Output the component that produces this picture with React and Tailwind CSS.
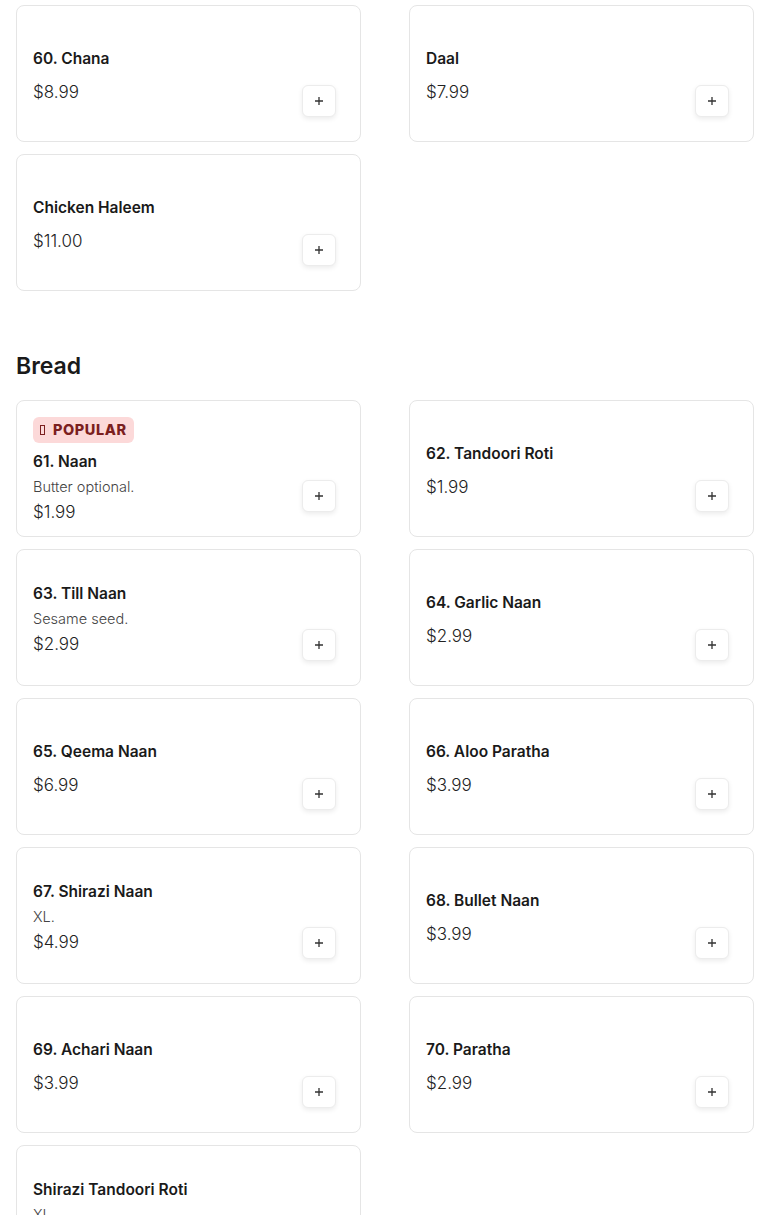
import React from "react";

const font = { fontFamily: '"Inter", "Lato", "Liberation Sans", sans-serif' };

function Card({ name, desc, price, popular }) {
  return (
    <div className="h-[137px] rounded-lg border border-[#e5e5e5] bg-white flex p-4">
      <div className={`flex-1 flex flex-col min-w-0 ${popular ? "justify-start" : "justify-center pt-[4px]"}`}>
        {popular && (
          <div className="shrink-0 self-start mb-[8px] flex items-center gap-[8px] rounded-md bg-[#fcd9d9] px-[7px] h-[26px]">
            <span className="inline-block w-[5px] h-[10px] border border-[#7b1f1f]" />
            <span className="text-[14.5px] font-extrabold tracking-[0.04em] text-[#7b1f1f] leading-none">POPULAR</span>
          </div>
        )}
        <div className="shrink-0 text-[15.5px] font-semibold text-[#1a1a1a] leading-[22px]">{name}</div>
        {desc && <div className="shrink-0 text-[14.5px] font-light text-[#444] leading-[21px] mt-[3px]">{desc}</div>}
        <div className={`shrink-0 text-[17px] font-light text-[#222] leading-[24px] ${desc ? "mt-[3px]" : "mt-[10px]"}`}>{price}</div>
      </div>
      <button className="self-end mb-[8px] mr-[8px] w-[34px] h-[32px] rounded-md border border-[#ececec] bg-white shadow-[0_2px_5px_rgba(0,0,0,0.08)] flex items-center justify-center">
        <svg width="10" height="10" viewBox="0 0 10 10">
          <path d="M5 1v8M1 5h8" stroke="#333" strokeWidth="1.3" />
        </svg>
      </button>
    </div>
  );
}

export default function App() {
  const top = [
    { name: "60. Chana", price: "$8.99" },
    { name: "Daal", price: "$7.99" },
    { name: "Chicken Haleem", price: "$11.00" },
  ];
  const bread = [
    { name: "61. Naan", desc: "Butter optional.", price: "$1.99", popular: true },
    { name: "62. Tandoori Roti", price: "$1.99" },
    { name: "63. Till Naan", desc: "Sesame seed.", price: "$2.99" },
    { name: "64. Garlic Naan", price: "$2.99" },
    { name: "65. Qeema Naan", price: "$6.99" },
    { name: "66. Aloo Paratha", price: "$3.99" },
    { name: "67. Shirazi Naan", desc: "XL.", price: "$4.99" },
    { name: "68. Bullet Naan", price: "$3.99" },
    { name: "69. Achari Naan", price: "$3.99" },
    { name: "70. Paratha", price: "$2.99" },
    { name: "Shirazi Tandoori Roti", desc: "XL.", price: "$5.99" },
  ];
  return (
    <div style={font} className="bg-white w-[770px] h-[1215px] overflow-hidden px-4 pt-[5px]">
      <div className="grid grid-cols-2 gap-x-12 gap-y-3">
        {top.map((it) => (
          <Card key={it.name} {...it} />
        ))}
      </div>
      <h2 className="mt-[59px] mb-[18px] text-[23px] font-semibold text-[#1a1a1a] leading-[32px]">Bread</h2>
      <div className="grid grid-cols-2 gap-x-12 gap-y-3">
        {bread.map((it) => (
          <Card key={it.name} {...it} />
        ))}
      </div>
    </div>
  );
}
